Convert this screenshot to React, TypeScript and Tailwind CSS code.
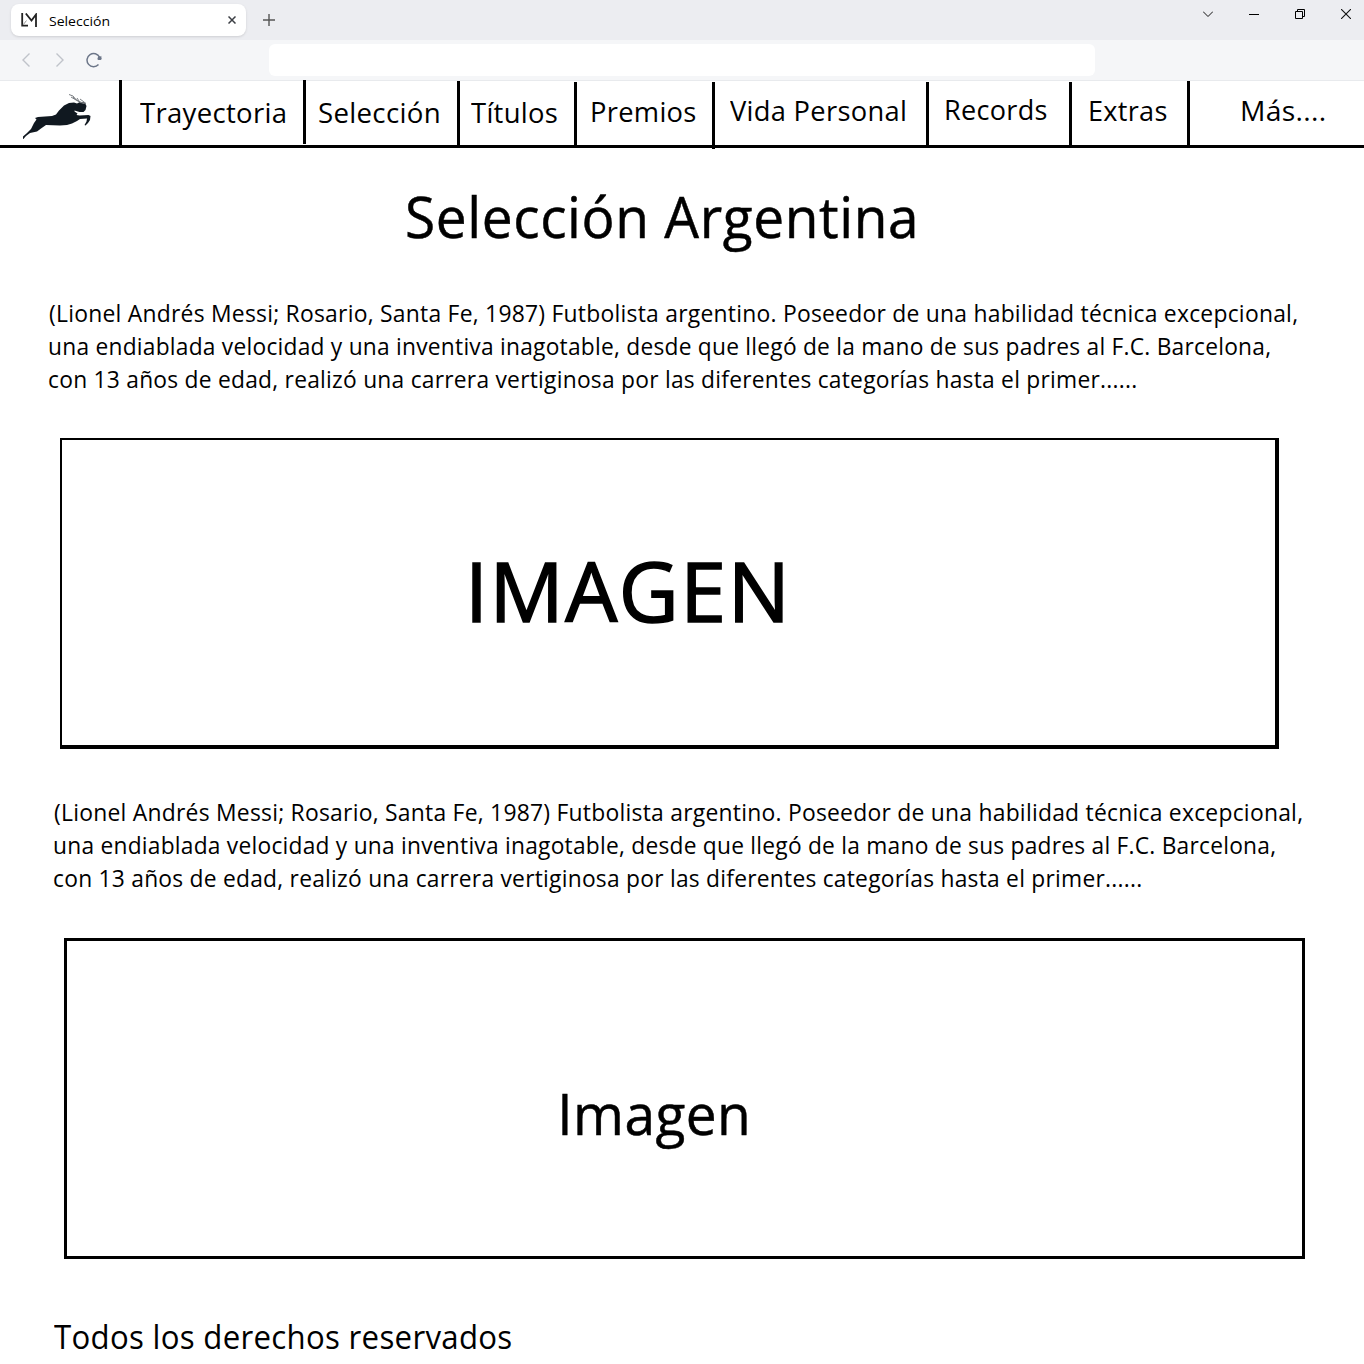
import { useLayoutEffect, useRef, useState } from "react";

type FitProps = { text: string; width: number; className: string };

// One line of text whose ink starts at the left edge and spans `width` pixels.
function Fit({ text, width, className }: FitProps) {
  const ref = useRef<HTMLSpanElement>(null);
  const [transform, setTransform] = useState("none");
  useLayoutEffect(() => {
    const ctx = document.createElement("canvas").getContext("2d");
    if (!ref.current || !ctx) return;
    const cs = getComputedStyle(ref.current);
    ctx.font = `${cs.fontWeight} ${cs.fontSize} ${cs.fontFamily}`;
    const m = ctx.measureText(text);
    const spacing = (parseFloat(cs.letterSpacing) || 0) * (text.length - 1);
    const k = width / (m.actualBoundingBoxRight + m.actualBoundingBoxLeft + spacing);
    setTransform(`translateX(${m.actualBoundingBoxLeft * k}px) scaleX(${k})`);
  }, [text, width]);
  return (
    <span ref={ref} className={`block w-max origin-left whitespace-pre ${className}`} style={{ transform }}>
      {text}
    </span>
  );
}

const nav = [
  { text: "Trayectoria", ink: 145, cell: "w-[181px] pl-[18px] pt-[13px]", rule: "h-16" },
  { text: "Selección", ink: 120, cell: "w-[151px] pl-[13px] pt-[13px]", rule: "mt-px h-16" },
  { text: "Títulos", ink: 86, cell: "w-[114px] pl-[11px] pt-[13px]", rule: "mt-[2px] h-[63px]" },
  { text: "Premios", ink: 103.5, cell: "w-[135px] pl-[15px] pt-[12px]", rule: "mt-[2px] h-[67px]" },
  { text: "Vida Personal", ink: 175, cell: "w-[211px] pl-[15px] pt-[11px]", rule: "mt-[2px] h-[63px]" },
  { text: "Records", ink: 100.5, cell: "w-[140px] pl-[17px] pt-[10px]", rule: "mt-[2px] h-[63px]" },
  { text: "Extras", ink: 76.5, cell: "w-[115px] pl-[18px] pt-[11px]", rule: "mt-px h-16" },
  { text: "Más....", ink: 83, cell: "w-[174px] pl-[52px] pt-[11px]", rule: "" },
];

const lines = [
  { text: "(Lionel Andrés Messi; Rosario, Santa Fe, 1987) Futbolista argentino. Poseedor de una habilidad técnica excepcional,", ink: 1248 },
  { text: "una endiablada velocidad y una inventiva inagotable, desde que llegó de la mano de sus padres al F.C. Barcelona,", ink: 1221 },
  { text: "con 13 años de edad, realizó una carrera vertiginosa por las diferentes categorías hasta el primer......", ink: 1087 },
];

function Paragraph({ className }: { className: string }) {
  return (
    <p className={`text-[23.5px] leading-[33px] ${className}`}>
      {lines.map((l) => (
        <Fit key={l.text} text={l.text} width={l.ink} className="tracking-[0.25px]" />
      ))}
    </p>
  );
}

function TabStrip() {
  return (
    <div className="flex h-10 bg-[#ecedf1]">
      <div className="ml-[11px] mt-1 flex h-8 w-[235px] rounded-lg bg-white shadow-sm">
        <svg className="ml-[10px] mt-[9px] h-[15px] w-4" viewBox="0 0 16 15" fill="none" stroke="#222" strokeWidth="1.8">
          <path d="M1.200 0v12.600H7" />
          <path d="M4.800 .5l5.700 7 4.500-6V14" />
          <path d="M2 12L5.500 7.500" strokeWidth="1" stroke="#999" />
        </svg>
        <div className="ml-3 mt-[5px] w-[160px]">
          <Fit text="Selección" width={60} className="text-[13px] leading-6" />
        </div>
        <svg className="ml-[19px] mt-3 h-2 w-2" viewBox="0 0 8 8" stroke="#3c3f45" strokeWidth="1.5">
          <path d="M.5 .5l7 7M7.5 .5l-7 7" />
        </svg>
      </div>
      <svg className="ml-[17px] mt-[14px] h-3 w-3" viewBox="0 0 12 12" stroke="#555" strokeWidth="1.4">
        <path d="M6 0v12M0 6h12" />
      </svg>
      <div className="ml-auto mr-[13px] mt-[9px] flex h-[10px] gap-9">
        <svg className="h-[10px] w-[10px]" viewBox="0 0 10 10" fill="none" stroke="#111">
          <path d="M0 2.500l5 5 5-5" />
        </svg>
        <svg className="h-[10px] w-[10px]" viewBox="0 0 10 10" stroke="#000">
          <path d="M0 5.500h10" />
        </svg>
        <svg className="h-[10px] w-[10px]" viewBox="0 0 10 10" fill="none" stroke="#000">
          <path d="M.5 2.500h7v7h-7zM2.500 2.500v-2h7v7h-2" />
        </svg>
        <svg className="h-[10px] w-[10px]" viewBox="0 0 10 10" stroke="#111" strokeWidth="1.1">
          <path d="M0 0l10 10M10 0L0 10" />
        </svg>
      </div>
    </div>
  );
}

function Toolbar() {
  return (
    <div className="flex h-[41px] border-b border-[#e8eaed] bg-[#f5f6f8]">
      <svg className="ml-[22px] mt-[13px] h-[14px] w-2" viewBox="0 0 8 14" fill="none" stroke="#c0c3ca" strokeWidth="1.4">
        <path d="M7.500 .5L1 7l6.500 6.500" />
      </svg>
      <svg className="ml-[26px] mt-[13px] h-[14px] w-2" viewBox="0 0 8 14" fill="none" stroke="#c0c3ca" strokeWidth="1.4">
        <path d="M.5 .5L7 7 .5 13.500" />
      </svg>
      <svg className="ml-[22px] mt-3 h-4 w-4" viewBox="0 0 16 16" fill="none" stroke="#6c7689" strokeWidth="1.5">
        <path d="M12.500 12.600A6.600 6.600 0 1 1 13.600 5.300" />
        <path d="M15.300 3.800v4h-4z" fill="#6c7689" stroke="none" />
        <circle cx="13.500" cy="6.200" r="1.900" fill="#6c7689" stroke="none" />
      </svg>
      <div className="ml-[167px] mt-1 h-8 w-[826px] rounded-md bg-white" />
    </div>
  );
}

function LeapingAntelope() {
  return (
    <svg className="ml-[22px] mt-[13px] h-[46px] w-[70px]" viewBox="22 93 70 46">
      <path
        fill="#101820"
        d="M23 138.500v-2l4-3.500 4-4 3-6 2.500-3.500-1.500-1.500 3-1 14-1 4-1.500 3-4 5-5 5-2.500 5-.5 3 1 3-1.500 3 0 2 1 1.500 3-1 4-2 2-4 0-5-1.500 0 1 3 2-1 1.500 3 .5 9-.5 2 1-.5 4-2 3-2.500 2.500-1-.5 2-3.500.5-3-7 .5-3 2-5 2.500-5 1.500-7 .5-14-.5-5 3.500-4 3-7 1.500-4 3-3 3.500z"
      />
      <path d="M69 94.500l4 1.500 3 4M71 97l5 3 8 3.500M77 98l3 4.500 6 1M73 97l6 5M80 99l6 4.500" fill="none" stroke="#7b7f84" strokeWidth="1" />
    </svg>
  );
}

export default function App() {
  return (
    <div className="h-[1364px] w-[1364px] overflow-hidden bg-white font-['Open_Sans',sans-serif] text-black">
      <TabStrip />
      <Toolbar />
      <nav className="-mt-px flex h-[68px] border-b-[3px] border-black">
        <div className="w-[119px]">
          <LeapingAntelope />
        </div>
        <div className="h-[65px] w-[3px] bg-black" />
        {nav.map((n) => (
          <div key={n.text} className="flex">
            <div className={n.cell}>
              <Fit text={n.text} width={n.ink} className="text-[27px] leading-[40px] tracking-[0.3px]" />
            </div>
            {n.rule && <div className={`w-[3px] bg-black ${n.rule}`} />}
          </div>
        ))}
      </nav>
      <h1 className="ml-[407px] mt-[28px] text-[57px] leading-[80px]">
        <Fit text="Selección Argentina" width={508} className="tracking-[0.6px] [-webkit-text-stroke:0.5px_#000]" />
      </h1>
      <Paragraph className="ml-[49px] mt-[41px]" />
      <div className="ml-[60px] mt-[42px] h-[311px] w-[1219px] border-b-4 border-l-2 border-r-4 border-t-2 border-black pl-[411px] pt-[92px]">
        <Fit text="IMAGEN" width={309} className="text-[82px] leading-[116px] tracking-[1.5px] [-webkit-text-stroke:1.6px_#000]" />
      </div>
      <Paragraph className="ml-[54px] mt-[47px]" />
      <div className="ml-[64px] mt-[43px] h-[321px] w-[1241px] border-[3px] border-black pl-[495px] pt-[132px]">
        <Fit text="Imagen" width={185} className="text-[57px] leading-[80px] tracking-[0.5px] [-webkit-text-stroke:0.5px_#000]" />
      </div>
      <footer className="ml-[54px] mt-[56px]">
        <Fit text="Todos los derechos reservados" width={457} className="text-[32px] leading-[44px] tracking-[0.3px]" />
      </footer>
    </div>
  );
}
